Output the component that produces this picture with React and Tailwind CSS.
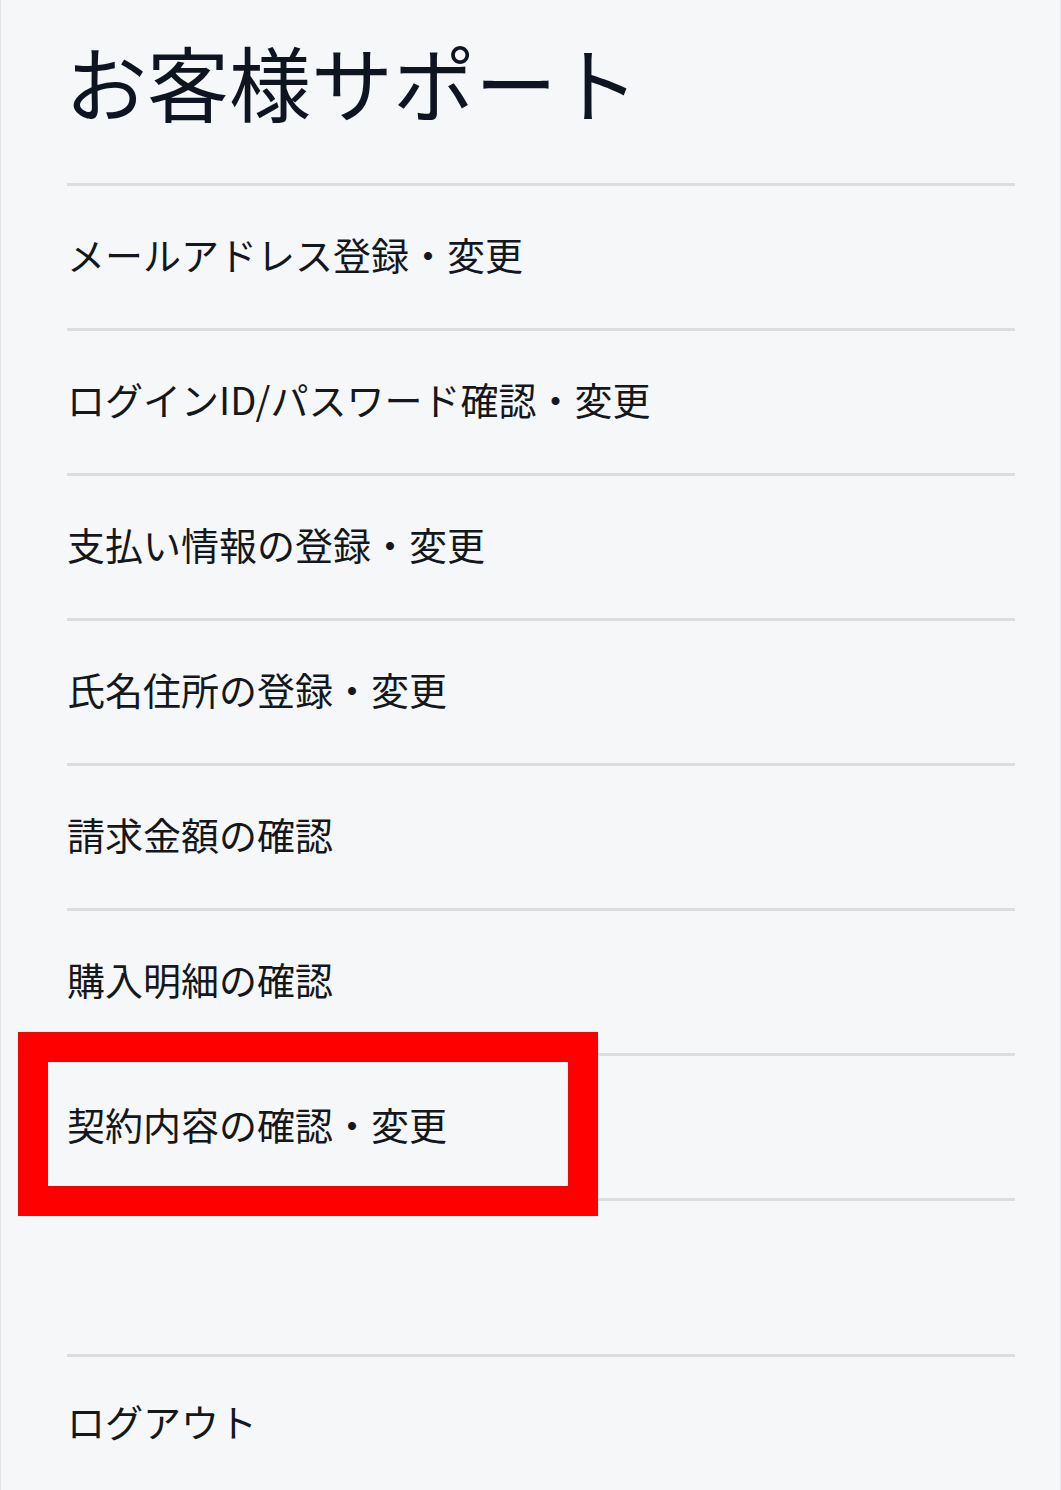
const ITEMS = [
  'メールアドレス登録・変更',
  'ログインID/パスワード確認・変更',
  '支払い情報の登録・変更',
  '氏名住所の登録・変更',
  '請求金額の確認',
  '購入明細の確認',
  '契約内容の確認・変更',
]

const HIGHLIGHT = 6

export default function App() {
  return (
    <div
      className="min-h-[1490px] bg-[#f5f7f9] border-x border-[#e3e5e8] text-[#14171c]"
      style={{ fontFamily: '"Noto Sans CJK JP", "Noto Sans", sans-serif' }}
    >
      <div className="pl-[66px] pr-[45px]">
        {/* Title */}
        <h1 className="pt-[40px] h-[183px] text-[82px] leading-[82px] font-normal -ml-[2px] text-[#0e1520]">
          お客様サポート
        </h1>

        {/* Menu */}
        <ul className="border-b-[3px] border-[#dcdde0]">
          {ITEMS.map((label, i) => (
            <li
              key={label}
              className="relative h-[145px] pb-[8px] border-t-[3px] border-[#dcdde0] flex items-center text-[38px]"
            >
              {label}
              {i === HIGHLIGHT && (
                <div className="absolute -left-[49px] -top-[24px] w-[580px] h-[184px] border-[30px] border-[#ff0000]" />
              )}
            </li>
          ))}
        </ul>

        <div className="h-[153px]" />

        {/* Logout */}
        <div className="h-[136px] pb-[6px] border-t-[3px] border-[#dcdde0] flex items-center text-[38px]">
          ログアウト
        </div>
      </div>
    </div>
  )
}
